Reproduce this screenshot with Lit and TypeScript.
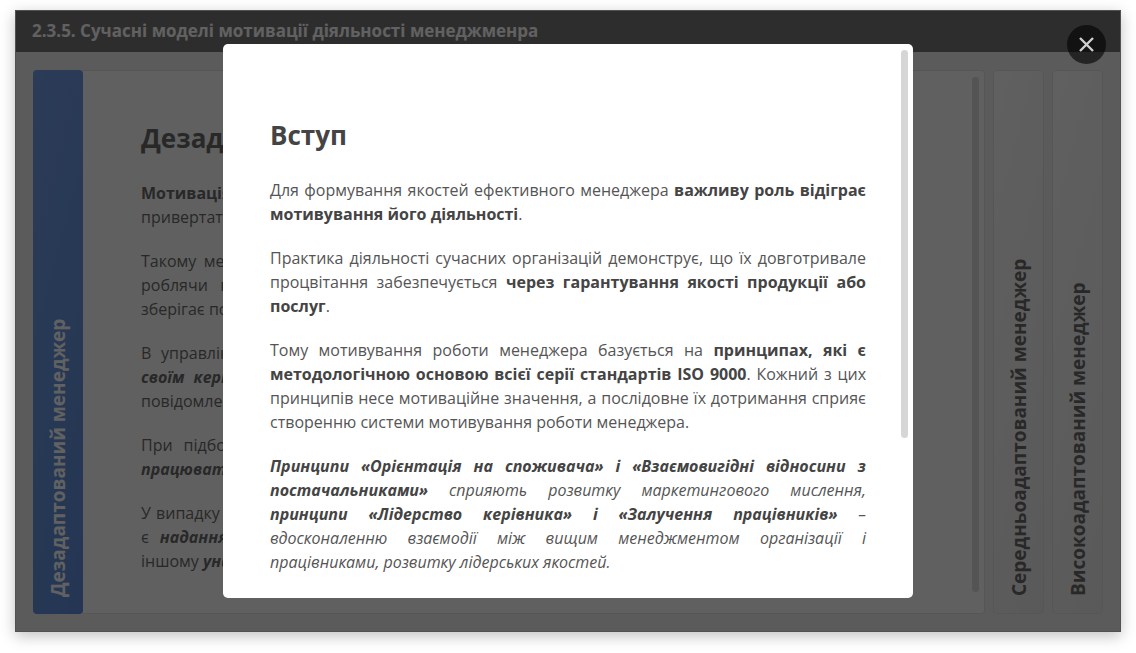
import { LitElement, html, css } from "lit";
import { customElement } from "lit/decorators.js";

@customElement("app-root")
export class AppRoot extends LitElement {
  static styles = css`
    :host {
      display: block;
      box-sizing: border-box;
      height: 100vh;
      padding: 10px 15px 21px;
      background: #fff;
      color: #444;
      font: 16px/24px "Open Sans", "Noto Sans", sans-serif;
    }
    * { box-sizing: border-box; }
    .frame {
      position: relative;
      display: flex;
      flex-direction: column;
      height: 100%;
      border: 1px solid #d4d4d4;
      background: #f0f0f0;
      box-shadow: 0 4px 14px rgba(0, 0, 0, 0.25);
    }
    .bar {
      flex: none;
      height: 41px;
      margin: 0;
      padding: 0 16px;
      background: #777;
      color: #fff;
      font-size: 17px;
      line-height: 40px;
      font-weight: 700;
    }
    .slides {
      flex: 1;
      min-height: 0;
      display: flex;
      gap: 8px;
      padding: 18px 17px 17px;
    }
    .open {
      flex: 1;
      min-width: 0;
      display: flex;
    }
    .tab {
      flex: none;
      width: 51px;
      display: flex;
      align-items: center;
      justify-content: flex-start;
      padding: 17px 0;
      border: 1px solid #e2e2e2;
      border-radius: 4px;
      background: linear-gradient(285deg, #fcfcfc, #ebebeb);
      color: #6b6b6b;
      font: 700 19px/26px "Open Sans", "Noto Sans", sans-serif;
      writing-mode: vertical-rl;
      transform: rotate(180deg);
      white-space: nowrap;
      text-align: left;
    }
    .tab.active {
      width: 50px;
      border: 0;
      background: linear-gradient(285deg, #739de6, #5f8edb);
      color: #fff;
    }
    .panel {
      flex: 1;
      min-width: 0;
      display: flex;
      gap: 128px;
      padding: 6px 5px 21px 58px;
      border: 1px solid #e2e2e2;
      border-left: 0;
      border-radius: 0 4px 4px 0;
      background: #fdfdfd;
    }
    .article { flex: 1; min-width: 0; padding-top: 41px; color: #6b6b6b; }
    h2 { margin: 0 0 23px; font-size: 26px; line-height: 40px; font-weight: 700; }
    p { margin: 0 0 20px; text-align: justify; }
    .line { display: block; text-align-last: justify; white-space: nowrap; }
    .thumb { flex: none; width: 7px; border-radius: 4px; background: #dcdcdc; }
    .overlay {
      position: absolute;
      inset: -1px;
      display: flex;
      justify-content: center;
      padding: 34px 20px;
      background: rgba(0, 0, 0, 0.62);
    }
    .dialog {
      width: 690px;
      max-width: 100%;
      display: flex;
      gap: 35px;
      padding: 6px 5px 6px 47px;
      border-radius: 5px;
      background: #fff;
      overflow: hidden;
    }
    .text { flex: 1; min-width: 0; padding-top: 65px; }
    .text p { color: #555; }
    .text b { color: #444; }
    .dialog .thumb { height: 388px; background: #d6d6d6; }
    .close {
      position: absolute;
      top: 15px;
      right: 15px;
      width: 39px;
      height: 39px;
      padding: 0;
      border: 0;
      border-radius: 50%;
      background: rgba(0, 0, 0, 0.6);
      display: grid;
      place-items: center;
    }
  `;

  private line(content: unknown) {
    return html`<span class="line">${content}</span>`;
  }

  render() {
    return html`
      <div class="frame">
        <h1 class="bar">2.3.5. Сучасні моделі мотивації діяльності менеджменра</h1>
        <div class="slides">
          <section class="open">
            <button class="tab active">Дезадаптований менеджер</button>
            <div class="panel">
              <div class="article">
                <h2>Дезадаптований менеджер</h2>
                <p>
                  ${this.line(html`<b>Мотивація</b> дезадаптованого менеджера полягає в його прагненні постійно`)}
                  привертати до себе увагу керівництва.
                </p>
                <p>
                  ${this.line("Такому менеджеру властиво виконувати роботу без власної ініціативи, при цьому він")}
                  ${this.line("роблячи вигляд постійної зайнятості, проте водночас він завжди дуже старанно")}
                  зберігає позитивні відносини з колегами.
                </p>
                <p>
                  ${this.line("В управлінні таким менеджером керівник має спиратись на встановлені для нього")}
                  ${this.line(html`<b><i>своїм керівництвом</i></b> визначені правила та вчасно робити йому детальне письмове`)}
                  повідомлення про результати роботи.
                </p>
                <p>
                  ${this.line("При підборі завдань варто враховувати його здатність та особисте прагнення до")}
                  <b><i>працювати самостійно</i></b>.
                </p>
                <p>
                  ${this.line("У випадку успішного виконання завдань доцільним для менеджера буде доручити йому")}
                  ${this.line(html`є <b><i>надання підтримки</i></b> та визнання його досягнень, а також схвалення роботи, в`)}
                  іншому <b><i>уникання конфліктів</i></b>.
                </p>
              </div>
              <div class="thumb"></div>
            </div>
          </section>
          <button class="tab">Середньоадаптований менеджер</button>
          <button class="tab">Високоадаптований менеджер</button>
        </div>
        <div class="overlay">
          <div class="dialog" role="dialog" aria-modal="true" aria-labelledby="intro">
            <div class="text">
              <h2 id="intro">Вступ</h2>
              <p>Для формування якостей ефективного менеджера <b>важливу роль відіграє мотивування його діяльності</b>.</p>
              <p>Практика діяльності сучасних організацій демонструє, що їх довготривале процвітання забезпечується <b>через гарантування якості продукції або послуг</b>.</p>
              <p>Тому мотивування роботи менеджера базується на <b>принципах, які є методологічною основою всієї серії стандартів ISO 9000</b>. Кожний з цих принципів несе мотиваційне значення, а послідовне їх дотримання сприяє створенню системи мотивування роботи менеджера.</p>
              <p><i><b>Принципи «Орієнтація на споживача» і «Взаємовигідні відносини з постачальниками»</b> сприяють розвитку маркетингового мислення, <b>принципи «Лідерство керівника» і «Залучення працівників»</b> – вдосконаленню взаємодії між вищим менеджментом організації і працівниками, розвитку лідерських якостей.</i></p>
            </div>
            <div class="thumb"></div>
          </div>
          <button class="close" aria-label="Закрити">
            <svg width="15" height="15" viewBox="0 0 15 15" fill="none" stroke="#cfcfcf" stroke-width="2.4">
              <path d="M1 1 14 14M14 1 1 14" />
            </svg>
          </button>
        </div>
      </div>
    `;
  }
}
